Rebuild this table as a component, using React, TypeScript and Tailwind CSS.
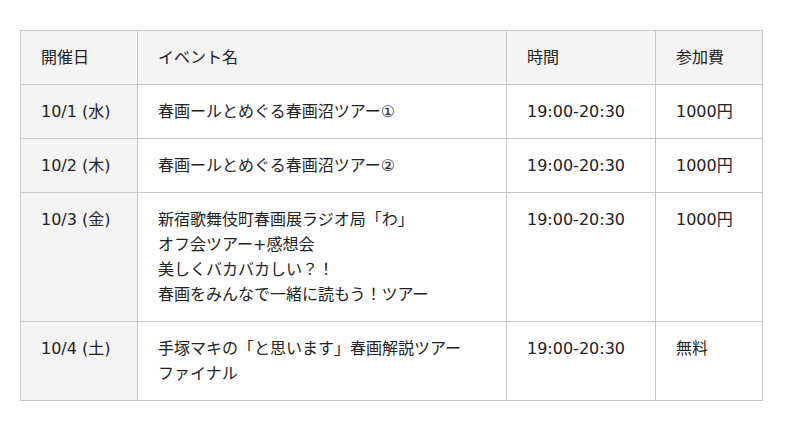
const rows = [
  { date: "10/1 (水)", title: ["春画ールとめぐる春画沼ツアー①"], time: "19:00-20:30", fee: "1000円" },
  { date: "10/2 (木)", title: ["春画ールとめぐる春画沼ツアー②"], time: "19:00-20:30", fee: "1000円" },
  {
    date: "10/3 (金)",
    title: [
      "新宿歌舞伎町春画展ラジオ局「わ」",
      "オフ会ツアー+感想会",
      "美しくバカバカしい？！",
      "春画をみんなで一緒に読もう！ツアー",
    ],
    time: "19:00-20:30",
    fee: "1000円",
  },
  {
    date: "10/4 (土)",
    title: ["手塚マキの「と思います」春画解説ツアー", "ファイナル"],
    time: "19:00-20:30",
    fee: "無料",
  },
];

const cell = "border border-[#c8c8c8] pl-[20px] pr-4 py-[14px] align-top text-left font-normal";

export default function App() {
  return (
    <div className="min-h-[431px] bg-white pl-[20px] pt-[30px] text-[16px] leading-[25px] text-[#222] [font-family:'DejaVu_Sans','Noto_Sans_CJK_JP',sans-serif]">
      <table className="w-[742px] table-fixed border-collapse">
        <colgroup>
          <col className="w-[117px]" />
          <col className="w-[369px]" />
          <col className="w-[149px]" />
          <col className="w-[107px]" />
        </colgroup>
        <thead>
          <tr className="bg-[#f4f4f4]">
            <th className={cell}>開催日</th>
            <th className={cell}>イベント名</th>
            <th className={cell}>時間</th>
            <th className={cell}>参加費</th>
          </tr>
        </thead>
        <tbody>
          {rows.map((r) => (
            <tr key={r.date}>
              <td className={`${cell} bg-[#f4f4f4]`}>{r.date}</td>
              <td className={cell}>
                {r.title.map((t) => (
                  <div key={t}>{t}</div>
                ))}
              </td>
              <td className={cell}>{r.time}</td>
              <td className={cell}>{r.fee}</td>
            </tr>
          ))}
        </tbody>
      </table>
    </div>
  );
}
